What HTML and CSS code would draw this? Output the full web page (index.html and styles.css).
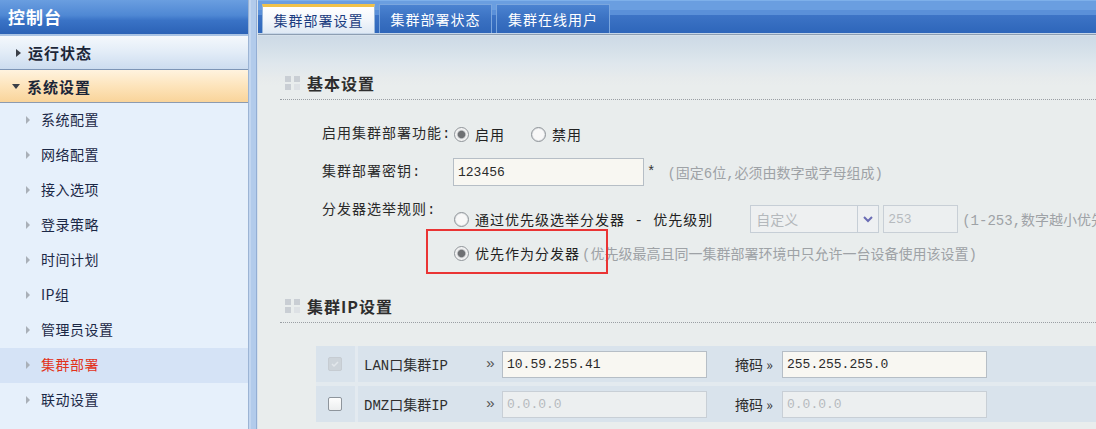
FILE: index.html
```html
<!DOCTYPE html>
<html lang="zh-CN">
<head>
<meta charset="utf-8">
<title>控制台 - 集群部署设置</title>
<link rel="stylesheet" href="styles.css">
</head>
<body>
<div class="app">
  <aside class="sidebar">
    <div class="side-head">控制台</div>
    <div class="grp grp-run"><span class="tri-r"></span>运行状态</div>
    <div class="grp grp-sys"><span class="tri-d"></span>系统设置</div>
    <ul class="menu">
      <li><span class="arr"></span>系统配置</li>
      <li><span class="arr"></span>网络配置</li>
      <li><span class="arr"></span>接入选项</li>
      <li><span class="arr"></span>登录策略</li>
      <li><span class="arr"></span>时间计划</li>
      <li><span class="arr"></span>IP组</li>
      <li><span class="arr"></span>管理员设置</li>
      <li class="active"><span class="arr"></span>集群部署</li>
      <li><span class="arr"></span>联动设置</li>
    </ul>
  </aside>
  <div class="splitter"></div>
  <main class="main">
    <div class="tabbar">
      <div class="tab active">集群部署设置</div>
      <div class="tab">集群部署状态</div>
      <div class="tab">集群在线用户</div>
    </div>
    <div class="tab-rule"></div>
    <div class="content">
      <div class="sec-head">
        <span class="sec-icon"><i></i><i></i><i></i><i class="lt"></i></span>
        <span class="sec-title">基本设置</span>
      </div>
      <div class="form">
        <div class="row r1">
          <span class="lbl">启用集群部署功能:</span>
          <span class="radio on"></span><span class="opt">启用</span>
          <span class="radio gap"></span><span class="opt">禁用</span>
        </div>
        <div class="row r2">
          <span class="lbl">集群部署密钥:</span>
          <span class="input key">123456</span>
          <span class="star">*</span>
          <span class="note">(固定6位,必须由数字或字母组成)</span>
        </div>
        <div class="row r3">
          <span class="lbl lbl-top">分发器选举规则:</span>
          <div class="opts">
            <div class="option o1">
              <span class="radio"></span><span class="opt">通过优先级选举分发器 - 优先级别</span>
              <span class="select"><span class="sel-text">自定义</span><span class="sel-btn"><svg width="10" height="7" viewBox="0 0 10 7"><path d="M1 1 L5 5 L9 1" fill="none" stroke="#6a6cb4" stroke-width="2"/></svg></span></span>
              <span class="input num dis">253</span>
              <span class="note">(1-253,数字越小优先</span>
            </div>
            <div class="option o2">
              <span class="radio on"></span><span class="opt">优先作为分发器</span>
              <span class="note">(优先级最高且同一集群部署环境中只允许一台设备使用该设置)</span>
              <span class="mark"></span>
            </div>
          </div>
        </div>
      </div>

      <div class="sec-head sec2">
        <span class="sec-icon"><i></i><i></i><i></i><i class="lt"></i></span>
        <span class="sec-title">集群IP设置</span>
      </div>
      <div class="iptable">
        <div class="trow">
          <span class="cbcell"><span class="cb cb-dis"><svg width="10" height="10" viewBox="0 0 10 10"><path d="M2 5 L4 7 L8 3" fill="none" stroke="#e2e7eb" stroke-width="1.5"/></svg></span></span>
          <span class="tlbl">LAN口集群IP</span>
          <span class="raq">»</span>
          <span class="input ip">10.59.255.41</span>
          <span class="mlbl">掩码 »</span>
          <span class="input ip">255.255.255.0</span>
        </div>
        <div class="trow">
          <span class="cbcell"><span class="cb"></span></span>
          <span class="tlbl">DMZ口集群IP</span>
          <span class="raq">»</span>
          <span class="input ip dis">0.0.0.0</span>
          <span class="mlbl">掩码 »</span>
          <span class="input ip dis">0.0.0.0</span>
        </div>
      </div>
    </div>
  </main>
</div>
</body>
</html>
```

FILE: styles.css
```css
* { box-sizing: border-box; }
html, body { margin: 0; padding: 0; }
body {
  width: 1096px;
  height: 429px;
  overflow: hidden;
  font-family: "Liberation Mono", "Noto Sans CJK SC", monospace;
  font-size: 14px;
  color: #222;
  background: #e9eded;
}
.app { display: flex; height: 429px; }

/* ---------- sidebar ---------- */
.sidebar {
  width: 248px;
  flex: none;
  background: #e6f0fb;
  font-family: "Noto Sans CJK SC", sans-serif;
}
.side-head {
  height: 36px;
  padding-left: 8px;
  background: linear-gradient(#6a9ee0, #4f88d4 45%, #3a73c6 60%, #2b62b6);
  border-bottom: 2px solid #a9c3e4;
  color: #fff;
  font-size: 17px;
  font-weight: bold;
  line-height: 33px;
  letter-spacing: 1px;
}
.grp {
  display: flex;
  align-items: center;
  font-size: 15px;
  font-weight: bold;
  letter-spacing: 1px;
  color: #1c2638;
}
.grp-run {
  height: 34px;
  padding-left: 16px;
  background: linear-gradient(#f4f8fc, #e2ecf7 50%, #ccdcef);
  border-bottom: 1px solid #7d95b6;
}
.grp-sys {
  height: 33px;
  padding-left: 12px;
  background: linear-gradient(#fff3df, #fde4bb 50%, #f9d49a);
  border-bottom: 1px solid #8c9bb0;
}
.tri-r {
  width: 0; height: 0;
  border-left: 5px solid #3a3f48;
  border-top: 4px solid transparent;
  border-bottom: 4px solid transparent;
  margin-right: 7px;
}
.tri-d {
  width: 0; height: 0;
  border-top: 5px solid #3a3f48;
  border-left: 4.5px solid transparent;
  border-right: 4.5px solid transparent;
  margin-right: 7px;
}
.menu { list-style: none; margin: 0; padding: 0; }
.menu li {
  height: 35px;
  display: flex;
  align-items: center;
  padding-left: 26px;
  padding-bottom: 3px;
  color: #1b2846;
  letter-spacing: 0.5px;
}
.menu li.active { background: #d5e3f6; color: #e2321a; }
.arr {
  width: 0; height: 0;
  border-left: 4px solid #a9b0b8;
  border-top: 4px solid transparent;
  border-bottom: 4px solid transparent;
  margin-right: 11px;
  margin-top: 2px;
}

.splitter {
  width: 10px;
  flex: none;
  background: linear-gradient(90deg, #9cb4d4 0 1px, #c2d6f0 1px 3px, #b2cbeb 3px 8px, #93aed4 8px 9px, #d8e2ec 9px);
}

/* ---------- main ---------- */
.main {
  flex: 1;
  min-width: 0;
  overflow: hidden;
  display: flex;
  flex-direction: column;
  background: #e9eded;
}
.tabbar {
  height: 33px;
  flex: none;
  display: flex;
  align-items: flex-end;
  gap: 4px;
  padding-left: 4px;
  background: linear-gradient(#7eb0ea 0 1px, #6a9ee0 1px 10px, #5a90d9 10px 15px, #3d74c6 15px, #2e66ba);
  font-family: "Noto Sans CJK SC", sans-serif;
}
.tab {
  width: 113px;
  height: 29px;
  display: flex;
  align-items: center;
  justify-content: center;
  letter-spacing: 1px;
  color: #fff;
  border: 1px solid #7aa6de;
  border-bottom: none;
  background: linear-gradient(#4b83d1, #3a71c2 50%, #2f66b9);
}
.tab.active {
  color: #1a3c80;
  border: 1px solid #97b7dc;
  border-top: 3px solid #f0c24a;
  border-bottom: none;
  background: linear-gradient(#ffffff, #f2f6fb 50%, #dfe9f4);
}
.tab + .tab + .tab { width: 114px; }
.tab-rule {
  height: 3px;
  flex: none;
  background: linear-gradient(#c6d6e8 0 1px, #8d9eb2 1px 2px, #d6e1eb 2px);
}
.content {
  flex: 1;
  padding-left: 22px;
  overflow: hidden;
  background: linear-gradient(#cddae6, #d5e0e9 14px, #dfe7ed 28px, #e7ebec 42px, #e9eded 50px) no-repeat;
  background-color: #e9eded;
}

.sec-head {
  margin-top: 37px;
  height: 27px;
  padding-bottom: 7px;
  display: flex;
  align-items: center;
  border-bottom: 1px dotted #9a9fa4;
}
.sec2 { margin-top: 26px; }
.sec-icon {
  width: 15px;
  height: 14px;
  margin-left: 5px;
  margin-right: 7px;
  display: grid;
  grid-template-columns: 6px 6px;
  grid-template-rows: 6px 6px;
  gap: 2px 3px;
}
.sec-icon i { display: block; background: #c9ced4; }
.sec-icon i.lt { background: #dde1e5; }
.sec-title {
  font-family: "Noto Sans CJK SC", sans-serif;
  font-size: 16px;
  font-weight: bold;
  color: #2e2e2e;
  letter-spacing: 1px;
  line-height: 20px;
}

.form { margin-top: 18px; padding-left: 42px; }
.row { display: flex; align-items: center; }
.r1 { height: 32px; }
.r2 { height: 44px; }
.r3 { align-items: flex-start; }
.lbl {
  width: 131px;
  flex: none;
  letter-spacing: 1px;
  color: #2a2a2a;
  line-height: 20px;
}
.lbl-top { padding-top: 6px; }
.opt { letter-spacing: 1px; color: #222; white-space: nowrap; }
.radio {
  width: 15px;
  height: 15px;
  flex: none;
  margin-left: 1px;
  margin-right: 6px;
  border-radius: 50%;
  border: 1px solid #8f9499;
  background: radial-gradient(circle, #f8f8f8 0 5px, #e4e6e8 6px);
}
.radio.on {
  background: radial-gradient(circle, #6e7073 0 3.2px, #a4a7aa 3.8px, #e9eaeb 4.6px, #f4f4f4 6px);
}
.radio.gap { margin-left: 26px; }

.input {
  display: flex;
  align-items: center;
  height: 28px;
  padding-left: 4px;
  border: 1px solid #b6bec6;
  background: #f8f7f2;
  color: #2a2a2a;
  font-size: 13px;
  flex: none;
}
.input.key { width: 191px; }
.input.dis { background: #eceff0; color: #b6babe; border-color: #c8cfd6; }
.star { margin: 0 12px 0 3px; color: #333; }
.note {
  color: #9ea2a6;
  white-space: nowrap;
}

.opts { display: flex; flex-direction: column; }
.option { display: flex; align-items: center; height: 34px; }
.o1 { margin-top: 8px; }
.o2 { position: relative; }
.o2 .opt { margin-right: 2px; }
.select {
  display: flex;
  margin-left: 37px;
  width: 129px;
  height: 28px;
  border: 1px solid #c6ced6;
  background: #eef0f1;
  flex: none;
}
.sel-text {
  flex: 1;
  padding-left: 5px;
  display: flex;
  align-items: center;
  color: #b4b8bc;
  font-family: "Noto Sans CJK SC", sans-serif;
}
.sel-btn {
  width: 21px;
  display: flex;
  align-items: center;
  justify-content: center;
  border-left: 1px solid #c6ced6;
  background: #eef0f2;
}
.input.num { width: 75px; margin-left: 4px; margin-right: 4px; }
.mark {
  position: absolute;
  left: -27px;
  top: -7px;
  width: 182px;
  height: 45px;
  border: 2px solid #ea3434;
  pointer-events: none;
}

/* ---------- ip table ---------- */
.iptable {
  margin-top: 23px;
  margin-left: 36px;
  display: flex;
  flex-direction: column;
  gap: 4px;
  background: #e3eaef;
}
.trow {
  height: 36px;
  display: flex;
  align-items: center;
  background: #d9e3ec;
  color: #2e2e2e;
}
.cbcell {
  width: 42px;
  height: 100%;
  display: flex;
  align-items: center;
  padding-left: 12px;
  border-right: 3px solid #e3eaf0;
  flex: none;
}
.cb {
  width: 14px;
  height: 14px;
  border: 1px solid #8e959c;
  border-radius: 2px;
  background: linear-gradient(#fdfdfd, #eceeef);
  display: flex;
  align-items: center;
  justify-content: center;
}
.cb-dis { border-color: #c6ccd2; background: #cdd4da; }
.tlbl { width: 128px; padding-left: 6px; flex: none; }
.raq { width: 16px; flex: none; color: #555; font-size: 15px; }
.input.ip { width: 205px; height: 27px; font-size: 13px; }
.mlbl {
  margin-left: 28px;
  width: 47px;
  flex: none;
  font-family: "Noto Sans CJK SC", sans-serif;
  color: #2e2e2e;
  white-space: nowrap;
}
```
